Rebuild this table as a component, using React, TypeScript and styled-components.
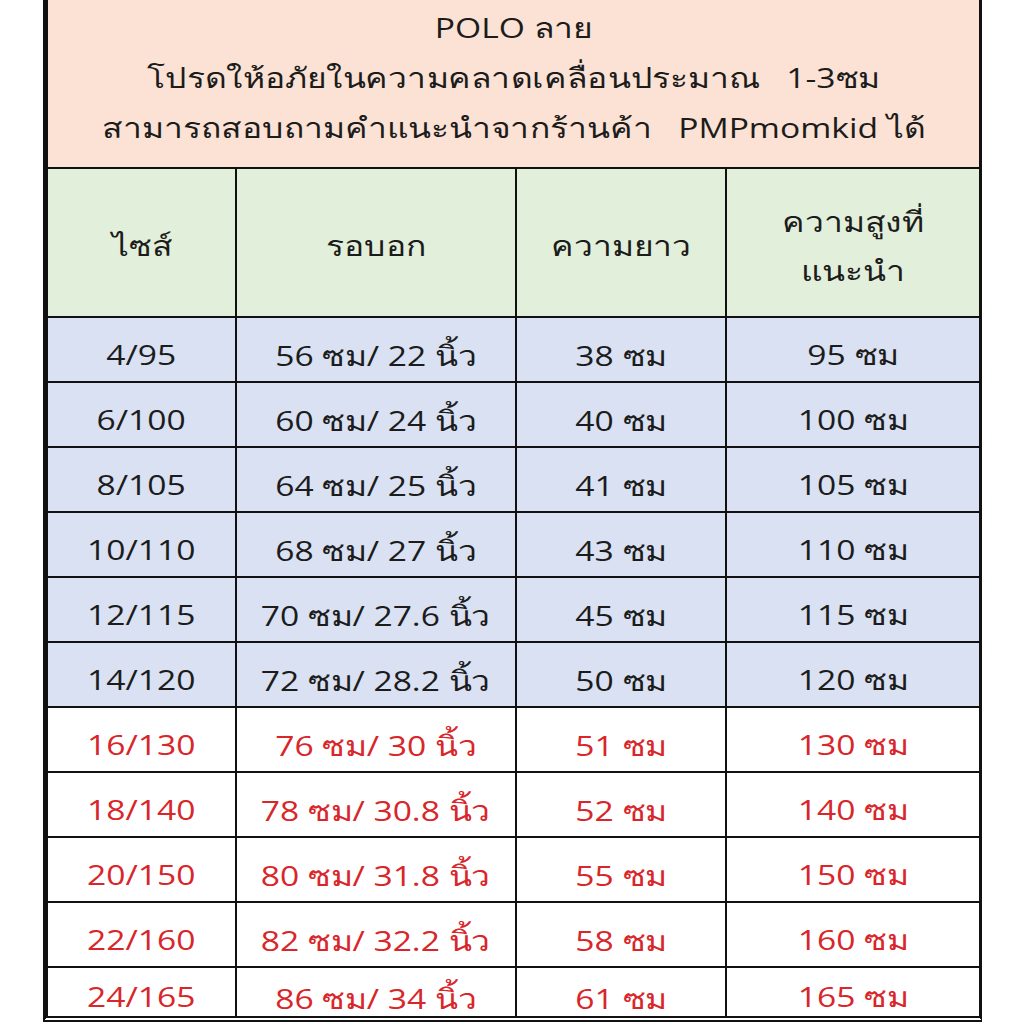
import * as React from "react";
import styled, { createGlobalStyle } from "styled-components";

interface SizeRow {
    size: string;
    chest: string;
    length: string;
    height: string;
    highlight?: boolean;
}

const rows: SizeRow[] = [
    { size: "4/95", chest: "56 ซม/ 22 นิ้ว", length: "38 ซม", height: "95 ซม" },
    { size: "6/100", chest: "60 ซม/ 24 นิ้ว", length: "40 ซม", height: "100 ซม" },
    { size: "8/105", chest: "64 ซม/ 25 นิ้ว", length: "41 ซม", height: "105 ซม" },
    { size: "10/110", chest: "68 ซม/ 27 นิ้ว", length: "43 ซม", height: "110 ซม" },
    { size: "12/115", chest: "70 ซม/ 27.6 นิ้ว", length: "45 ซม", height: "115 ซม" },
    { size: "14/120", chest: "72 ซม/ 28.2 นิ้ว", length: "50 ซม", height: "120 ซม" },
    { size: "16/130", chest: "76 ซม/ 30 นิ้ว", length: "51 ซม", height: "130 ซม", highlight: true },
    { size: "18/140", chest: "78 ซม/ 30.8 นิ้ว", length: "52 ซม", height: "140 ซม", highlight: true },
    { size: "20/150", chest: "80 ซม/ 31.8 นิ้ว", length: "55 ซม", height: "150 ซม", highlight: true },
    { size: "22/160", chest: "82 ซม/ 32.2 นิ้ว", length: "58 ซม", height: "160 ซม", highlight: true },
    { size: "24/165", chest: "86 ซม/ 34 นิ้ว", length: "61 ซม", height: "165 ซม", highlight: true },
];

const GlobalStyle = createGlobalStyle`
    html, body {
        margin: 0;
        padding: 0;
        background: #fff;
    }
    body {
        font-family: "Open Sans", "Noto Sans", sans-serif;
        color: #1c1c1c;
    }
`;

const App: React.FC = () => {
    return (
        <>
            <GlobalStyle />
            <Page>
                <Sheet>
                    <Title>
                        <TitleLine>
                            <Wide>POLO ลาย</Wide>
                        </TitleLine>
                        <TitleLine>
                            <Wide>{"โปรดให้อภัยในความคลาดเคลื่อนประมาณ   1-3ซม"}</Wide>
                        </TitleLine>
                        <TitleLine>
                            <Wide>{"สามารถสอบถามคำแนะนำจากร้านค้า   PMPmomkid ได้"}</Wide>
                        </TitleLine>
                    </Title>
                    <Grid>
                        <HeadCell>
                            <Wide>ไซส์</Wide>
                        </HeadCell>
                        <HeadCell>
                            <Wide>รอบอก</Wide>
                        </HeadCell>
                        <HeadCell>
                            <Wide>ความยาว</Wide>
                        </HeadCell>
                        <HeadCell>
                            <Wide>
                                ความสูงที่
                                <br />
                                แนะนำ
                            </Wide>
                        </HeadCell>
                        {rows.map((r, i) => {
                            const last = i === rows.length - 1;
                            return (
                                <React.Fragment key={r.size}>
                                    <Cell $red={r.highlight} $last={last}>
                                        <Wide>{r.size}</Wide>
                                    </Cell>
                                    <Cell $red={r.highlight} $last={last} $shift={3}>
                                        <Wide>{r.chest}</Wide>
                                    </Cell>
                                    <Cell $red={r.highlight} $last={last} $shift={3}>
                                        <Wide>{r.length}</Wide>
                                    </Cell>
                                    <Cell $red={r.highlight} $last={last}>
                                        <Wide>{r.height}</Wide>
                                    </Cell>
                                </React.Fragment>
                            );
                        })}
                    </Grid>
                </Sheet>
            </Page>
        </>
    );
};

const Page = styled.div`
    width: 1024px;
    height: 1024px;
    overflow: hidden;
    padding-left: 43px;
    box-sizing: border-box;
`;

const Sheet = styled.div`
    width: 939px;
    border-left: 5px solid #111;
    border-right: 3px solid #111;
    border-bottom: 6px double #111;
    box-sizing: border-box;
`;

/* the source sheet is stretched sideways, so text is widened to match */
const Wide = styled.span`
    display: inline-block;
    transform: scaleX(1.2);
    white-space: pre;
`;

const Title = styled.div`
    background: #fbe2d4;
    height: 169px;
    box-sizing: border-box;
    padding-top: 2px;
    border-bottom: 2px solid #111;
    display: flex;
    flex-direction: column;
    align-items: center;
`;

const TitleLine = styled.div`
    font-size: 28px;
    font-weight: 500;
    line-height: 50px;
    color: #1c1c1c;
`;

const Grid = styled.div`
    display: grid;
    grid-template-columns: 189px 280px 210px 252px;
    grid-template-rows: 149px repeat(10, 65px) 48px;
`;

const HeadCell = styled.div`
    background: #e2efda;
    display: flex;
    align-items: center;
    justify-content: center;
    text-align: center;
    padding-top: 6px;
    box-sizing: border-box;
    font-size: 28px;
    font-weight: 500;
    line-height: 49px;
    border-right: 2px solid #111;
    border-bottom: 2px solid #111;
    &:nth-child(4n) {
        border-right: 0;
    }
`;

const Cell = styled.div<{ $red?: boolean; $last?: boolean; $shift?: number }>`
    background: ${(p) => (p.$red ? "#ffffff" : "#d9e1f2")};
    color: ${(p) => (p.$red ? "#d8262a" : "#1c1c1c")};
    display: flex;
    align-items: center;
    justify-content: center;
    padding-top: ${(p) => 8 + (p.$shift ?? 0)}px;
    box-sizing: border-box;
    font-size: 28px;
    font-weight: 500;
    line-height: 1;
    white-space: nowrap;
    border-right: 2px solid #111;
    border-bottom: ${(p) => (p.$last ? "0" : "2px solid #111")};
    &:nth-child(4n) {
        border-right: 0;
    }
`;

export default App;
